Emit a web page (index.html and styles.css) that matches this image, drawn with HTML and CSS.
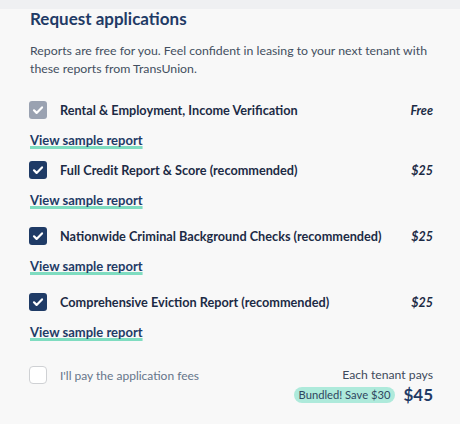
FILE: index.html
```html
<!DOCTYPE html>
<html>
<head>
<meta charset="utf-8">
<link rel="stylesheet" href="styles.css">
</head>
<body>
<div class="topbar"></div>
<main class="panel">
  <h1 class="title">Request applications</h1>
  <p class="intro">Reports are free for you. Feel confident in leasing to your next tenant with these reports from TransUnion.</p>

  <div class="items">
    <div class="item item-first">
      <div class="row">
        <span class="box box-disabled"><svg viewBox="0 0 18 18"><path d="M5 9.3l2.6 2.6L13 6.4" /></svg></span>
        <span class="label">Rental &amp; Employment, Income Verification</span>
        <span class="price">Free</span>
      </div>
      <a class="link">View sample report</a>
    </div>
    <div class="item item-second">
      <div class="row">
        <span class="box"><svg viewBox="0 0 18 18"><path d="M5 9.3l2.6 2.6L13 6.4" /></svg></span>
        <span class="label">Full Credit Report &amp; Score (recommended)</span>
        <span class="price">$25</span>
      </div>
      <a class="link">View sample report</a>
    </div>
    <div class="item">
      <div class="row">
        <span class="box"><svg viewBox="0 0 18 18"><path d="M5 9.3l2.6 2.6L13 6.4" /></svg></span>
        <span class="label">Nationwide Criminal Background Checks (recommended)</span>
        <span class="price">$25</span>
      </div>
      <a class="link">View sample report</a>
    </div>
    <div class="item">
      <div class="row">
        <span class="box"><svg viewBox="0 0 18 18"><path d="M5 9.3l2.6 2.6L13 6.4" /></svg></span>
        <span class="label">Comprehensive Eviction Report (recommended)</span>
        <span class="price">$25</span>
      </div>
      <a class="link">View sample report</a>
    </div>
  </div>

  <div class="footer">
    <div class="pay">
      <span class="box box-empty"></span>
      <span class="pay-label">I'll pay the application fees</span>
    </div>
    <div class="total">
      <div class="total-caption">Each tenant pays</div>
      <div class="total-line">
        <span class="badge">Bundled! Save $30</span>
        <span class="amount">$45</span>
      </div>
    </div>
  </div>
</main>
</body>
</html>
```

FILE: styles.css
```css
html, body {
  margin: 0;
  padding: 0;
  background: #f8f8f8;
}
body {
  font-family: Lato, "Open Sans", sans-serif;
  color: #1c2b45;
}
.topbar {
  height: 9px;
  background: #eff0f2;
}
.panel {
  padding: 0 27px 0 30px;
}
.title {
  margin: 0;
  font-size: 17px;
  line-height: 20px;
  font-weight: 700;
  color: #1f3b66;
}
.intro {
  margin: 13px 0 0;
  font-size: 12.3px;
  line-height: 18px;
  color: #434f60;
}
.items {
  margin-top: 22px;
  display: flex;
  flex-direction: column;
}
.item {
  display: flex;
  flex-direction: column;
  align-items: flex-start;
  margin-top: 18px;
}
.item-first {
  margin-top: 0;
}
.item-second {
  margin-top: 12px;
}
.row {
  display: flex;
  align-items: center;
  align-self: stretch;
  height: 20px;
}
.box {
  width: 18px;
  height: 18px;
  flex: none;
  margin-left: -1px;
  border-radius: 3px;
  background: #1f3b66;
  display: flex;
  align-items: center;
  justify-content: center;
  box-sizing: border-box;
}
.box svg {
  width: 18px;
  height: 18px;
}
.box path {
  fill: none;
  stroke: #fff;
  stroke-width: 2.2;
  stroke-linecap: round;
  stroke-linejoin: round;
}
.box-disabled {
  background: #9aa2b1;
}
.box-empty {
  background: #fff;
  border: 1.5px solid #cfd1d4;
  border-radius: 4px;
}
.label {
  margin-left: 13px;
  flex: 1;
  font-size: 12.7px;
  font-weight: 700;
  color: #1c2b45;
  white-space: nowrap;
}
.price {
  font-size: 12.5px;
  font-weight: 700;
  font-style: italic;
  color: #1c2b45;
}
.link {
  margin-top: 12px;
  font-size: 13px;
  font-weight: 700;
  line-height: 16px;
  color: #1f3b66;
  text-decoration: underline;
  text-decoration-color: #7fdcc0;
  text-decoration-thickness: 3px;
  text-underline-offset: 1px;
  text-decoration-skip-ink: none;
}
.footer {
  margin-top: 26px;
  display: flex;
  justify-content: space-between;
  align-items: flex-start;
}
.pay {
  display: flex;
  align-items: center;
  height: 18px;
}
.pay-label {
  margin-left: 13px;
  font-size: 12px;
  color: #66758a;
}
.total {
  display: flex;
  flex-direction: column;
  align-items: flex-end;
}
.total-caption {
  font-size: 12.2px;
  line-height: 18px;
  color: #3e4a5b;
}
.total-line {
  margin-top: 1px;
  display: flex;
  align-items: center;
}
.badge {
  background: #aeeadb;
  border-radius: 9px;
  padding: 1px 5px;
  font-size: 11.2px;
  line-height: 14px;
  color: #2f4660;
}
.amount {
  margin-left: 8px;
  font-size: 17px;
  font-weight: 700;
  line-height: 20px;
  color: #1f3b66;
}
```
